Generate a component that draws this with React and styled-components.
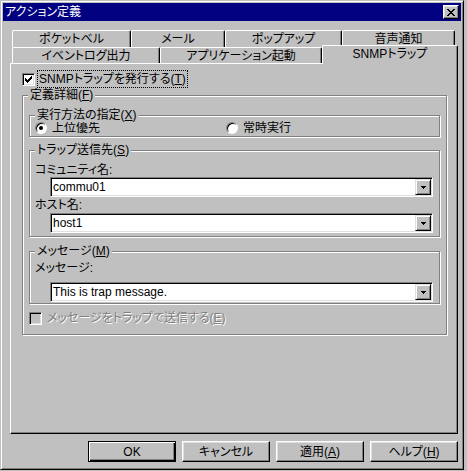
import React from 'react';
import styled, { createGlobalStyle } from 'styled-components';

const GlobalStyle = createGlobalStyle`
  html, body { margin: 0; padding: 0; background: #c0c0c0; }
  body {
    font-family: "Liberation Sans", "Noto Sans CJK JP", sans-serif;
    font-size: 12px;
    font-feature-settings: "palt";
    color: #000;
  }
  * { box-sizing: border-box; }
  u { text-decoration: underline; text-underline-offset: 1px; }
`;

const Window = styled.div`
  width: 464px;
  height: 470px;
  padding: 2px;
  background: #c0c0c0;
  border: 1px solid;
  border-color: #c0c0c0 #000 #000 #c0c0c0;
  box-shadow: inset 1px 1px #fff, inset -1px -1px #808080;
  display: flex;
  flex-direction: column;
`;

const TitleBar = styled.div`
  height: 18px;
  background: #000080;
  color: #fff;
  display: flex;
  align-items: center;
  justify-content: space-between;
  padding: 0 2px;
  line-height: 14px;
`;

const CloseButton = styled.div`
  width: 16px;
  height: 14px;
  background: #c0c0c0;
  border: 1px solid;
  border-color: #fff #000 #000 #fff;
  box-shadow: inset -1px -1px #808080, inset 1px 1px #dfdfdf;
  display: flex;
  align-items: center;
  justify-content: center;
`;

const Body = styled.div`
  flex: 1;
  padding: 9px 3px 0 7px;
  display: flex;
  flex-direction: column;
`;

const TabRow = styled.div`
  display: flex;
  align-items: flex-end;
  height: ${(p) => p.$h}px;
  padding-left: 2px;
`;

const Tab = styled.div`
  width: ${(p) => p.$w}px;
  height: ${(p) => (p.$active ? 19 : p.$h)}px;
  margin-bottom: ${(p) => (p.$active ? -1 : 0)}px;
  position: ${(p) => (p.$active ? 'relative' : 'static')};
  z-index: ${(p) => (p.$active ? 1 : 'auto')};
  background: #c0c0c0;
  border-top: 1px solid #fff;
  border-left: 1px solid #fff;
  border-right: 1px solid #000;
  border-radius: 2px 2px 0 0;
  box-shadow: inset -1px 0 #808080;
  text-align: center;
  padding-top: 1px;
  line-height: 14px;
  white-space: nowrap;
`;

const Panel = styled.div`
  width: 448px;
  height: 371px;
  border: 1px solid;
  border-color: #fff #000 #000 #fff;
  box-shadow: inset -1px -1px #808080;
  padding: 7px 10px 0 11px;
`;

const CheckRow = styled.div`
  display: flex;
  align-items: center;
  gap: ${(p) => p.$gap}px;
  height: 16px;
  margin-top: ${(p) => p.$mt || 0}px;
`;

const CheckBox = styled.div`
  width: 13px;
  height: 13px;
  flex: none;
  background: ${(p) => (p.$disabled ? '#c0c0c0' : '#fff')};
  border: 1px solid;
  border-color: #808080 #fff #fff #808080;
  box-shadow: inset 1px 1px #000, inset -1px -1px #dfdfdf;
  display: flex;
  align-items: center;
  justify-content: center;
`;

const Focused = styled.span`
  outline: 1px dotted #000;
  padding: 1px 1px;
  line-height: 14px;
`;

const Label = styled.span`
  line-height: 14px;
  color: ${(p) => (p.$disabled ? '#808080' : '#000')};
  text-shadow: ${(p) => (p.$disabled ? '1px 1px 0 #fff' : 'none')};
  white-space: nowrap;
`;

const Group = styled.div`
  position: relative;
  height: ${(p) => p.$h}px;
  margin-top: ${(p) => p.$mt || 0}px;
  padding: ${(p) => p.$pad};
  border: 1px solid #808080;
  box-shadow: inset 1px 1px #fff, 1px 1px #fff;
`;

const Legend = styled.span`
  position: absolute;
  top: -8px;
  left: 5px;
  padding: 0 2px;
  background: #c0c0c0;
  line-height: 14px;
  white-space: nowrap;
`;

const RadioGrid = styled.div`
  display: grid;
  grid-template-columns: 191px 1fr;
`;

const RadioOption = styled.div`
  display: flex;
  align-items: center;
  gap: 5px;
  height: 14px;
`;

const Radio = styled.div`
  width: 12px;
  height: 12px;
  flex: none;
  border-radius: 50%;
  background: #fff;
  border: 1px solid;
  border-color: #808080 #fff #fff #808080;
  box-shadow: inset 1px 1px #000;
  display: flex;
  align-items: center;
  justify-content: center;
  &::after {
    content: '';
    display: ${(p) => (p.$checked ? 'block' : 'none')};
    width: 4px;
    height: 4px;
    border-radius: 50%;
    background: #000;
  }
`;

const FieldLabel = styled.div`
  height: 14px;
  line-height: 14px;
  margin-top: ${(p) => p.$mt || 0}px;
`;

const Combo = styled.div`
  width: 383px;
  height: 20px;
  margin-left: 15px;
  margin-top: ${(p) => p.$mt || 0}px;
  padding: 1px;
  background: #fff;
  border: 1px solid;
  border-color: #808080 #fff #fff #808080;
  box-shadow: inset 1px 1px #000, inset -1px -1px #dfdfdf;
  display: flex;
`;

const ComboText = styled.div`
  flex: 1;
  line-height: 16px;
  padding-left: 1px;
  white-space: nowrap;
`;

const DropButton = styled.div`
  width: 16px;
  height: 16px;
  flex: none;
  background: #c0c0c0;
  border: 1px solid;
  border-color: #dfdfdf #000 #000 #dfdfdf;
  box-shadow: inset 1px 1px #fff, inset -1px -1px #808080;
  display: flex;
  align-items: center;
  justify-content: center;
`;

const ButtonBar = styled.div`
  display: flex;
  justify-content: flex-end;
  gap: 6px;
  margin-top: 7px;
`;

const Button = styled.div`
  width: 88px;
  height: 21px;
  background: #c0c0c0;
  border: 1px solid;
  border-color: ${(p) => (p.$default ? '#000' : '#fff #000 #000 #fff')};
  box-shadow: ${(p) =>
    p.$default
      ? 'inset 1px 1px #fff, inset -1px -1px #000, inset -2px -2px #808080'
      : 'inset -1px -1px #808080, inset 1px 1px #dfdfdf'};
  display: flex;
  align-items: center;
  justify-content: center;
  line-height: 14px;
`;

const Px = ({ w, h, d }) => (
  <svg width={w} height={h} viewBox={`0 0 ${w} ${h}`} shapeRendering="crispEdges">
    <path d={d} fill="#000" />
  </svg>
);

const CLOSE_X =
  'M0 0h2v1h-2z M6 0h2v1h-2z M1 1h2v1h-2z M5 1h2v1h-2z M2 2h4v1h-4z M3 3h2v1h-2z M2 4h4v1h-4z M1 5h2v1h-2z M5 5h2v1h-2z M0 6h2v1h-2z M6 6h2v1h-2z';
const CHECK =
  'M6 0h1v1h-1z M5 1h2v1h-2z M0 2h1v1h-1z M4 2h3v1h-3z M0 3h2v1h-2z M3 3h3v1h-3z M0 4h5v1h-5z M1 5h3v1h-3z M2 6h1v1h-1z';
const ARROW = 'M0 0h5v1h-5z M1 1h3v1h-3z M2 2h1v1h-1z';

const backTabs = [
  { label: 'ポケットベル', w: 119 },
  { label: 'メール', w: 94 },
  { label: 'ポップアップ', w: 117 },
  { label: '音声通知', w: 113 },
];

const frontTabs = [
  { label: 'イベントログ出力', w: 148 },
  { label: 'アプリケーション起動', w: 162 },
  { label: 'SNMPトラップ', w: 136, active: true },
];

const ComboBox = ({ value, mt }) => (
  <Combo $mt={mt}>
    <ComboText>{value}</ComboText>
    <DropButton>
      <Px w={5} h={3} d={ARROW} />
    </DropButton>
  </Combo>
);

const App = () => {
  return (
    <>
      <GlobalStyle />
      <Window>
        <TitleBar>
          <span>アクション定義</span>
          <CloseButton>
            <Px w={8} h={7} d={CLOSE_X} />
          </CloseButton>
        </TitleBar>
        <Body>
          <TabRow $h={17}>
            {backTabs.map((t) => (
              <Tab key={t.label} $w={t.w} $h={17}>{t.label}</Tab>
            ))}
          </TabRow>
          <TabRow $h={16}>
            {frontTabs.map((t) => (
              <Tab key={t.label} $w={t.w} $h={16} $active={t.active}>{t.label}</Tab>
            ))}
          </TabRow>
          <Panel>
            <CheckRow $gap={3}>
              <CheckBox>
                <Px w={7} h={7} d={CHECK} />
              </CheckBox>
              <Focused>SNMPトラップを発行する(<u>T</u>)</Focused>
            </CheckRow>

            <Group $h={240} $mt={8} $pad="19px 6px 0 6px">
              <Legend>定義詳細(<u>F</u>)</Legend>

              <Group $h={22} $pad="5px 0 0 5px">
                <Legend>実行方法の指定(<u>X</u>)</Legend>
                <RadioGrid>
                  <RadioOption>
                    <Radio $checked />
                    <Label>上位優先</Label>
                  </RadioOption>
                  <RadioOption>
                    <Radio />
                    <Label>常時実行</Label>
                  </RadioOption>
                </RadioGrid>
              </Group>

              <Group $h={87} $mt={13} $pad="12px 0 0 5px">
                <Legend>トラップ送信先(<u>S</u>)</Legend>
                <FieldLabel>コミュニティ名:</FieldLabel>
                <ComboBox value="commu01" />
                <FieldLabel $mt={1}>ホスト名:</FieldLabel>
                <ComboBox value="host1" mt={1} />
              </Group>

              <Group $h={53} $mt={14} $pad="9px 0 0 5px">
                <Legend>メッセージ(<u>M</u>)</Legend>
                <FieldLabel>メッセージ:</FieldLabel>
                <ComboBox value="This is trap message." mt={7} />
              </Group>

              <CheckRow $gap={5} $mt={6}>
                <CheckBox $disabled />
                <Label $disabled>メッセージをトラップで送信する(<u>E</u>)</Label>
              </CheckRow>
            </Group>
          </Panel>
          <ButtonBar>
            <Button $default>OK</Button>
            <Button>キャンセル</Button>
            <Button>適用(<u>A</u>)</Button>
            <Button>ヘルプ(<u>H</u>)</Button>
          </ButtonBar>
        </Body>
      </Window>
    </>
  );
};

export default App;
